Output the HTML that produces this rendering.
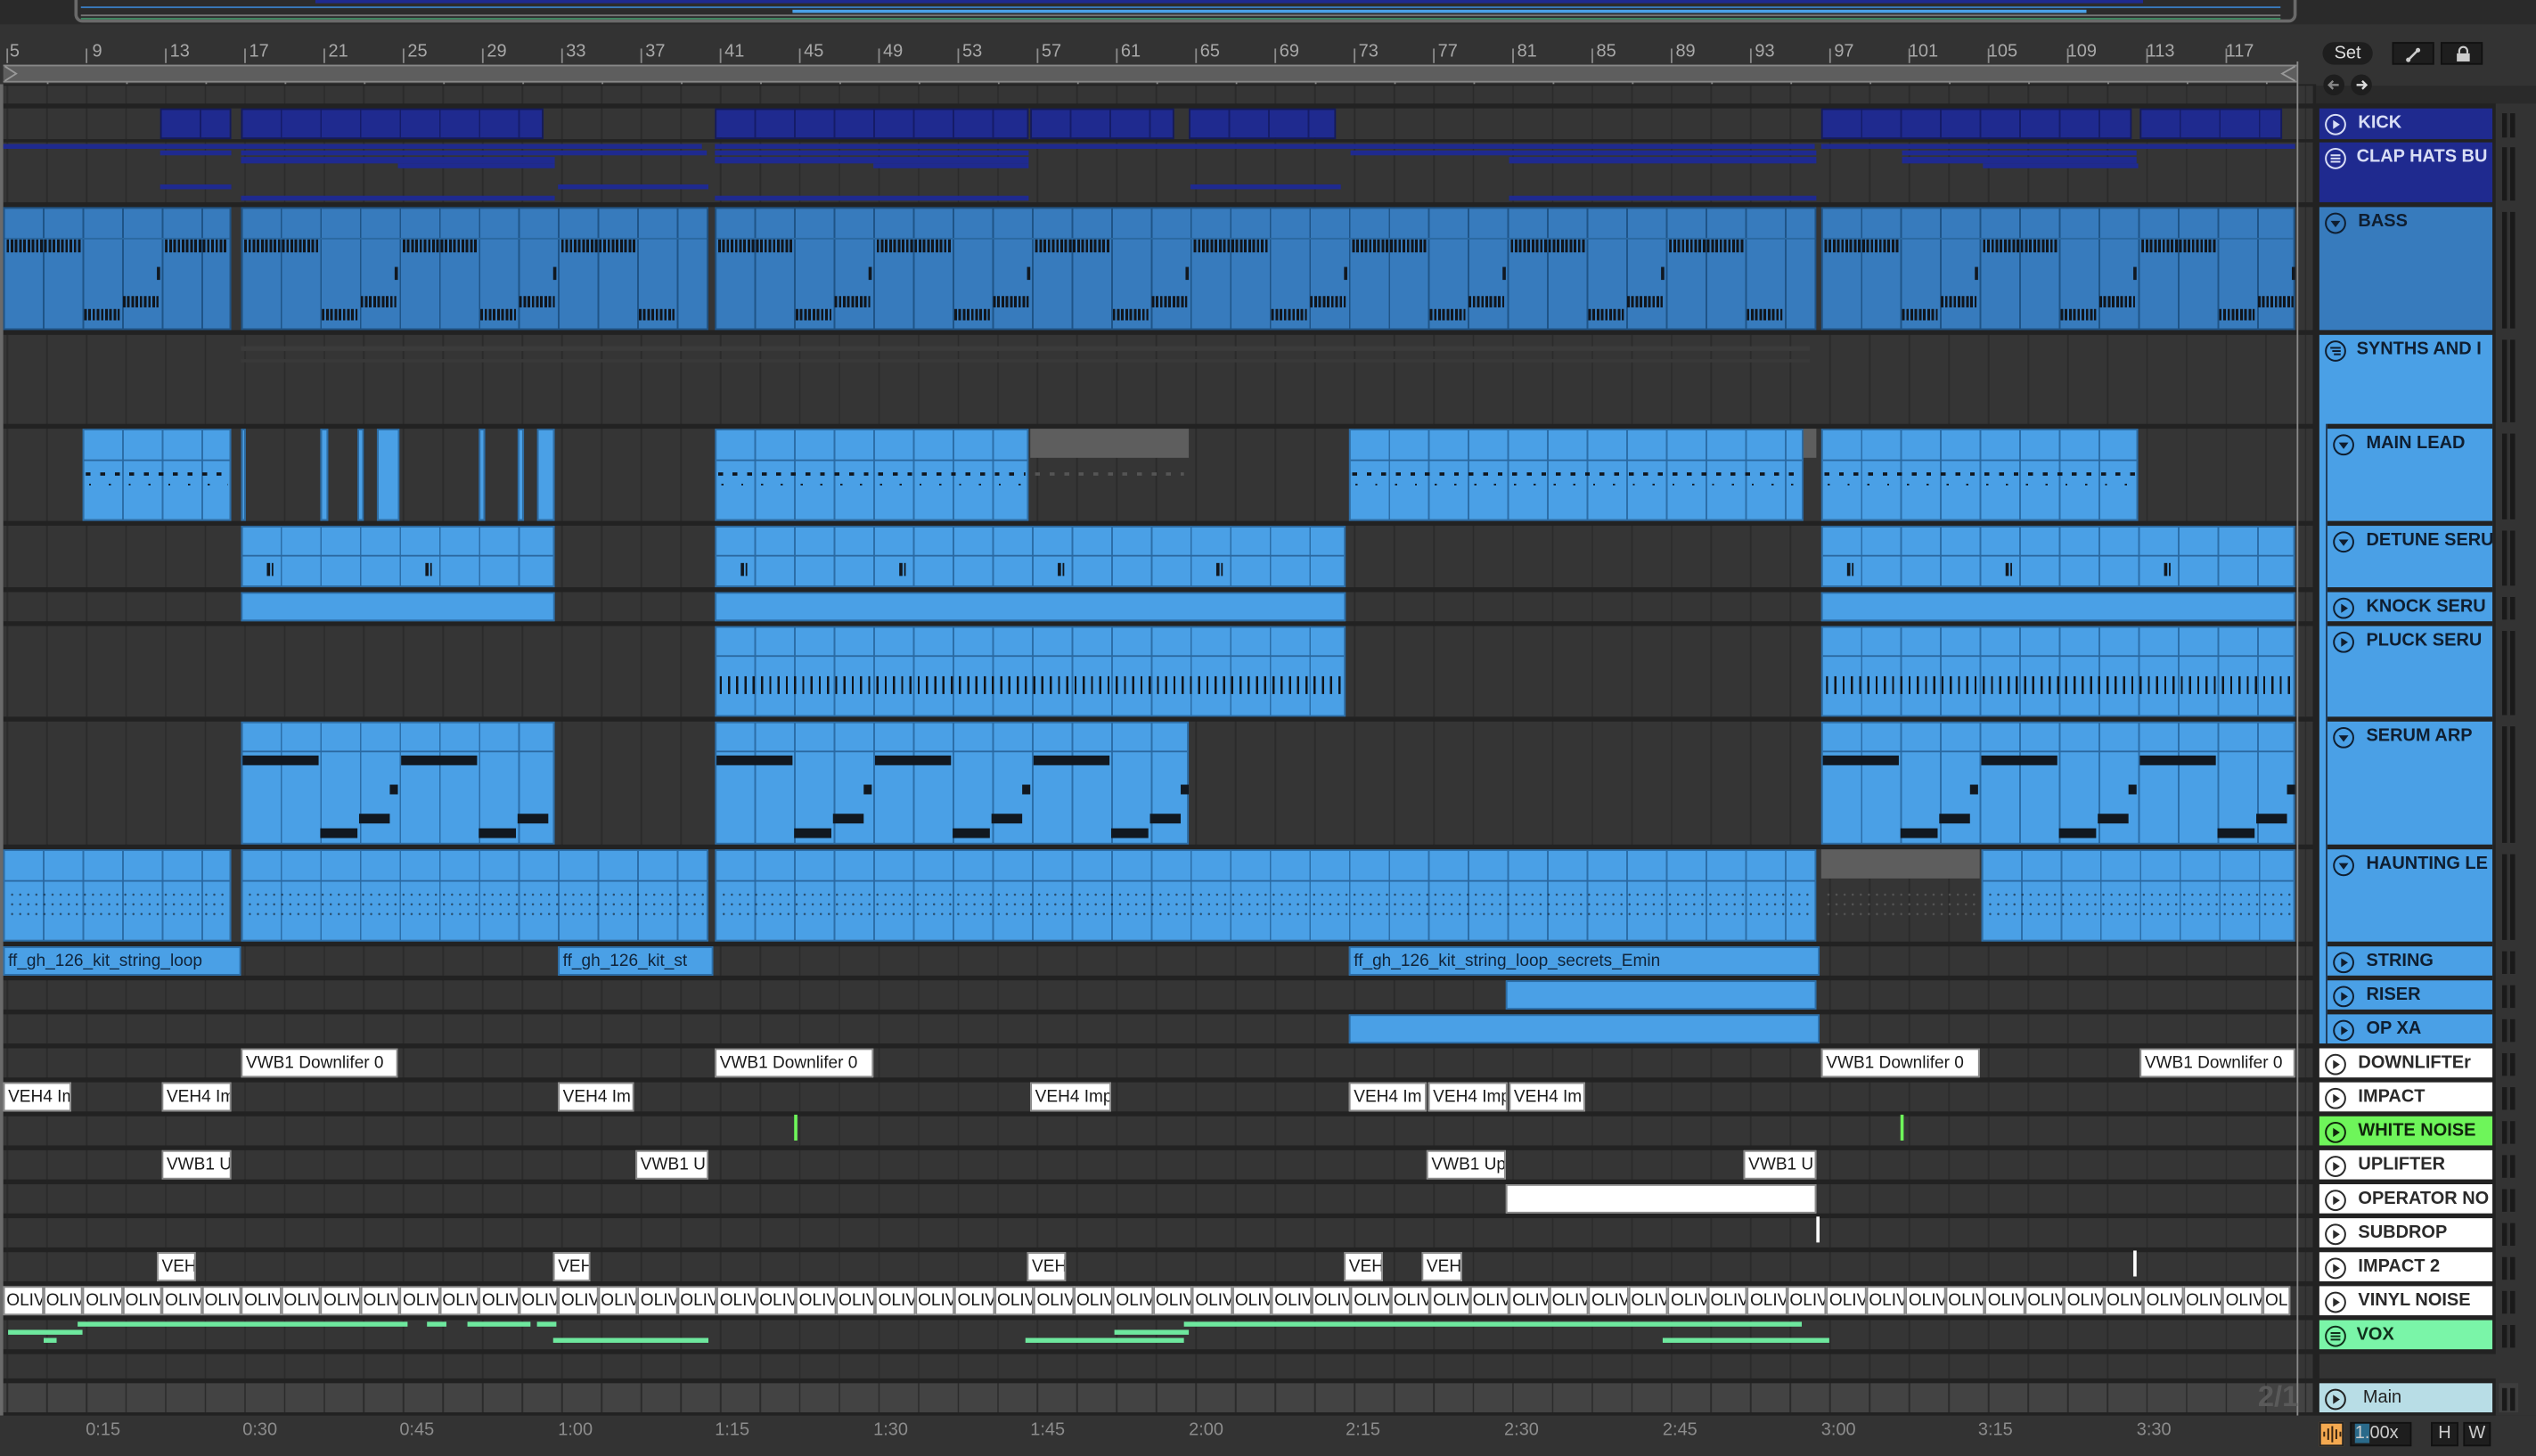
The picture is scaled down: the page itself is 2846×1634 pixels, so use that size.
<!DOCTYPE html>
<html><head><meta charset="utf-8">
<style>
html,body{margin:0;padding:0;background:#2b2b2b;overflow:hidden}
#s{position:absolute;left:0;top:0;width:1568px;height:900px;transform:scale(1.8151,1.8156);transform-origin:0 0;background:#2a2a2a;font-family:"Liberation Sans",sans-serif;overflow:hidden}
.a{position:absolute;box-sizing:border-box}
.lane{position:absolute;left:2px;width:1428px;background:repeating-linear-gradient(90deg,#2b2b2b 0 1px,#353535 1px 24.5px);background-position:2px 0}
.c{position:absolute;box-sizing:border-box;overflow:hidden}
.c::before{content:"";position:absolute;left:0;right:0;top:var(--h,-5px);height:1px;background:#2a68a0}
.l{background:repeating-linear-gradient(90deg,#4aa0e6 0 23.5px,#2c6ea8 23.5px 24.5px);border:1px solid #2c6ea8}
.b{background:repeating-linear-gradient(90deg,#377bbd 0 23.5px,#1f5487 23.5px 24.5px);border:1px solid #1f5487}
.k{background:repeating-linear-gradient(90deg,#1f2a8f 0 23.5px,#151c68 23.5px 24.5px);border:1px solid #141a5c}
.w{background:#fff;border:1px solid #8a8a8a;color:#1a1a1a;font-size:10.5px;line-height:16px;padding-left:2px;white-space:nowrap}
.t{font-size:10.5px;line-height:16px;padding-left:2px;white-space:nowrap;color:#10243a}
.g{position:absolute;background:#1f2a8f;height:2.5px}
.n{position:absolute;background:repeating-linear-gradient(90deg,#10151c 0 1.6px,transparent 1.6px 2.6px)}
.nb{position:absolute;background:#111820}
.h{position:absolute;left:1434px;width:107px;box-sizing:border-box;font-weight:bold;font-size:11px;white-space:nowrap;overflow:hidden}
.h svg{position:absolute;left:3px;top:3px}
.h span{position:absolute;left:24px;top:3px}
.m{position:absolute;left:1545px;width:12px}
.m::before,.m::after{content:"";position:absolute;top:3px;bottom:1px;width:3px;background:#1a1a1a}
.m::before{left:2px}.m::after{left:7px}
.ru{position:absolute;top:26px;font-size:11px;color:#a8a8a8}
.tk{position:absolute;width:1px;background:#8a8a8a}
.tm{position:absolute;top:878px;font-size:11px;color:#8c8c8c}
.ol{position:absolute;left:2px;top:795px;display:flex}
.ol i{font-style:normal;display:block;box-sizing:border-box;width:24.5px;height:18px;background:#fff;border:1px solid #8a8a8a;font-size:10.5px;line-height:16px;padding-left:1px;overflow:hidden;color:#1a1a1a;white-space:nowrap}
.vx{position:absolute;height:3px;background:#6ee89e}
</style></head><body>
<div id="s">
<!-- overview -->
<div class="a" style="left:0;top:0;width:1568px;height:15px;background:#2a2a2a"></div>
<div class="a" style="left:46px;top:-3px;width:1374px;height:17px;border:2px solid #6a6a6a;border-radius:0 0 5px 5px;background:#2c2c2c"></div>
<div class="a" style="left:195px;top:0;width:1130px;height:2px;background:#1f2a8f"></div>
<div class="a" style="left:50px;top:4px;width:1360px;height:1px;background:#3a7cc0"></div>
<div class="a" style="left:490px;top:6px;width:800px;height:2px;background:#4aa0e6"></div>
<div class="a" style="left:50px;top:9px;width:1360px;height:1px;background:#777"></div>
<div class="a" style="left:50px;top:11px;width:1360px;height:1px;background:#3f8a62"></div>
<div class="a" style="left:0;top:15px;width:1568px;height:38px;background:#333"></div>
<!-- ruler -->
<div id="ruler"></div>
<div class="ru" style="left:6px">5</div><div class="ru" style="left:57px">9</div><div class="ru" style="left:105px">13</div><div class="ru" style="left:154px">17</div><div class="ru" style="left:203px">21</div><div class="ru" style="left:252px">25</div><div class="ru" style="left:301px">29</div><div class="ru" style="left:350px">33</div><div class="ru" style="left:399px">37</div><div class="ru" style="left:448px">41</div><div class="ru" style="left:497px">45</div><div class="ru" style="left:546px">49</div><div class="ru" style="left:595px">53</div><div class="ru" style="left:644px">57</div><div class="ru" style="left:693px">61</div><div class="ru" style="left:742px">65</div><div class="ru" style="left:791px">69</div><div class="ru" style="left:840px">73</div><div class="ru" style="left:889px">77</div><div class="ru" style="left:938px">81</div><div class="ru" style="left:987px">85</div><div class="ru" style="left:1036px">89</div><div class="ru" style="left:1085px">93</div><div class="ru" style="left:1134px">97</div><div class="ru" style="left:1180px">101</div><div class="ru" style="left:1229px">105</div><div class="ru" style="left:1278px">109</div><div class="ru" style="left:1327px">113</div><div class="ru" style="left:1376px">117</div>
<div class="a" style="left:2px;top:40px;width:1418px;height:11px;background:#5e5e5e;border-top:1px solid #888;border-bottom:1px solid #888"></div>
<svg class="a" style="left:2px;top:40px" width="10" height="11"><path d="M1 1L8 5.5 1 10" fill="none" stroke="#999" stroke-width="1"/></svg>
<svg class="a" style="left:1408px;top:40px" width="12" height="11"><path d="M11 1L3 5.5 11 10" fill="none" stroke="#999" stroke-width="1"/></svg>
<!-- lanes -->
<div class="a" style="left:0;top:52px;width:1432px;height:823px;background:#222"></div>
<div class="lane" style="top:53px;height:11px"></div>
<div class="lane" style="top:67px;height:19px"></div>
<div class="lane" style="top:88px;height:37px"></div>
<div class="lane" style="top:128px;height:76px"></div>
<div class="lane" style="top:207px;height:55px"></div>
<div class="lane" style="top:265px;height:57px"></div>
<div class="lane" style="top:325px;height:38px"></div>
<div class="lane" style="top:366px;height:18px"></div>
<div class="lane" style="top:387px;height:56px"></div>
<div class="lane" style="top:446px;height:76px"></div>
<div class="lane" style="top:525px;height:57px"></div>
<div class="lane" style="top:585px;height:18px"></div>
<div class="lane" style="top:606px;height:18px"></div>
<div class="lane" style="top:627px;height:18px"></div>
<div class="lane" style="top:648px;height:18px"></div>
<div class="lane" style="top:669px;height:18px"></div>
<div class="lane" style="top:690px;height:18px"></div>
<div class="lane" style="top:711px;height:18px"></div>
<div class="lane" style="top:732px;height:18px"></div>
<div class="lane" style="top:753px;height:18px"></div>
<div class="lane" style="top:774px;height:18px"></div>
<div class="lane" style="top:795px;height:18px"></div>
<div class="lane" style="top:816px;height:18px"></div>
<div class="lane" style="top:837px;height:15px"></div>
<div class="lane" style="top:855px;height:18px;background:repeating-linear-gradient(90deg,#2b2b2b 0 1px,#434343 1px 24.5px);background-position:2px 0"></div>
<div class="a" style="left:0;top:52px;width:2px;height:823px;background:#6a6a6a"></div>
<!-- synth track faint -->
<div class="a" style="left:149px;top:214px;width:970px;height:3px;background:#3b3b3b"></div>
<div class="a" style="left:149px;top:222px;width:970px;height:2px;background:#393939"></div>
<!-- KICK -->
<div class="c k" style="left:99px;top:67px;width:44px;height:19px"></div>
<div class="c k" style="left:149px;top:67px;width:187px;height:19px"></div>
<div class="c k" style="left:442px;top:67px;width:194px;height:19px"></div>
<div class="c k" style="left:637px;top:67px;width:89px;height:19px"></div>
<div class="c k" style="left:735px;top:67px;width:91px;height:19px"></div>
<div class="c k" style="left:1126px;top:67px;width:192px;height:19px"></div>
<div class="c k" style="left:1323px;top:67px;width:88px;height:19px"></div>
<!-- CLAP lines -->
<div class="g" style="left:2px;top:89px;width:432px"></div><div class="g" style="left:442px;top:89px;width:680px"></div><div class="g" style="left:1126px;top:89px;width:293px"></div>
<div class="g" style="left:99px;top:93px;width:44px"></div><div class="g" style="left:149px;top:93px;width:288px"></div><div class="g" style="left:442px;top:93px;width:194px"></div><div class="g" style="left:835px;top:93px;width:288px"></div><div class="g" style="left:1176px;top:93px;width:145px"></div>
<div class="g" style="left:149px;top:97px;width:194px;height:4px"></div><div class="g" style="left:442px;top:97px;width:194px;height:4px"></div><div class="g" style="left:933px;top:97px;width:190px;height:4px"></div><div class="g" style="left:1176px;top:97px;width:145px;height:4px"></div>
<div class="g" style="left:246px;top:101px;width:97px"></div><div class="g" style="left:540px;top:101px;width:96px"></div><div class="g" style="left:1226px;top:101px;width:96px"></div>
<div class="g" style="left:99px;top:114px;width:44px"></div><div class="g" style="left:345px;top:114px;width:93px"></div><div class="g" style="left:736px;top:114px;width:93px"></div>
<div class="g" style="left:149px;top:121px;width:194px"></div><div class="g" style="left:442px;top:121px;width:194px"></div><div class="g" style="left:933px;top:121px;width:190px"></div>
<!-- BASS -->
<div class="c b" style="left:2px;top:128px;width:141px;height:76px;--h:18px"></div>
<div class="c b" style="left:149px;top:128px;width:289px;height:76px;--h:18px"></div>
<div class="c b" style="left:442px;top:128px;width:681px;height:76px;--h:18px"></div>
<div class="c b" style="left:1126px;top:128px;width:293px;height:76px;--h:18px"></div>
<!-- MAIN LEAD -->
<div class="c l" style="left:51px;top:265px;width:92px;height:57px;--h:18px"></div>
<div class="c l" style="left:149px;top:265px;width:3px;height:57px"></div>
<div class="c l" style="left:198px;top:265px;width:5px;height:57px"></div>
<div class="c l" style="left:221px;top:265px;width:4px;height:57px"></div>
<div class="c l" style="left:233px;top:265px;width:14px;height:57px"></div>
<div class="c l" style="left:296px;top:265px;width:4px;height:57px"></div>
<div class="c l" style="left:320px;top:265px;width:4px;height:57px"></div>
<div class="c l" style="left:332px;top:265px;width:11px;height:57px"></div>
<div class="c l" style="left:442px;top:265px;width:194px;height:57px;--h:18px"></div>
<div class="a" style="left:637px;top:265px;width:98px;height:18px;background:#5e5e5e"></div>
<div class="c l" style="left:834px;top:265px;width:281px;height:57px;--h:18px"></div>
<div class="a" style="left:1115px;top:265px;width:8px;height:18px;background:#5e5e5e"></div>
<div class="c l" style="left:1126px;top:265px;width:196px;height:57px;--h:18px"></div>
<!-- DETUNE / KNOCK -->
<div class="c l" style="left:149px;top:325px;width:194px;height:38px;--h:17px"></div>
<div class="c l" style="left:442px;top:325px;width:390px;height:38px;--h:17px"></div>
<div class="c l" style="left:1126px;top:325px;width:293px;height:38px;--h:17px"></div>
<div class="c l" style="left:149px;top:366px;width:194px;height:18px;background:#4aa0e6"></div>
<div class="c l" style="left:442px;top:366px;width:390px;height:18px;background:#4aa0e6"></div>
<div class="c l" style="left:1126px;top:366px;width:293px;height:18px;background:#4aa0e6"></div>
<!-- PLUCK -->
<div class="c l" style="left:442px;top:387px;width:390px;height:56px;--h:17px"></div>
<div class="c l" style="left:1126px;top:387px;width:293px;height:56px;--h:17px"></div>
<div class="n" style="left:445px;top:418px;width:385px;height:11px;background:repeating-linear-gradient(90deg,#10151c 0 1.3px,transparent 1.3px 5.1px)"></div>
<div class="n" style="left:1129px;top:418px;width:288px;height:11px;background:repeating-linear-gradient(90deg,#10151c 0 1.3px,transparent 1.3px 5.1px)"></div>
<!-- SERUM ARP -->
<div class="c l" style="left:149px;top:446px;width:194px;height:76px;--h:17px"></div>
<div class="c l" style="left:442px;top:446px;width:293px;height:76px;--h:17px"></div>
<div class="c l" style="left:1126px;top:446px;width:293px;height:76px;--h:17px"></div>
<!-- HAUNTING -->
<div class="c l" style="left:2px;top:525px;width:141px;height:57px;--h:18px"></div>
<div class="c l" style="left:149px;top:525px;width:289px;height:57px;--h:18px"></div>
<div class="c l" style="left:442px;top:525px;width:681px;height:57px;--h:18px"></div>
<div class="a" style="left:1126px;top:525px;width:98px;height:18px;background:#5e5e5e"></div>
<div class="c l" style="left:1225px;top:525px;width:194px;height:57px;--h:18px"></div>
<!-- STRING etc -->
<div class="c l t" style="left:2px;top:585px;width:147px;height:18px;background:#4aa0e6">ff_gh_126_kit_string_loop</div>
<div class="c l t" style="left:345px;top:585px;width:96px;height:18px;background:#4aa0e6">ff_gh_126_kit_st</div>
<div class="c l t" style="left:834px;top:585px;width:291px;height:18px;background:#4aa0e6">ff_gh_126_kit_string_loop_secrets_Emin</div>
<div class="c l" style="left:931px;top:606px;width:192px;height:18px;background:#4aa0e6"></div>
<div class="c l" style="left:834px;top:627px;width:291px;height:18px;background:#4aa0e6"></div>
<div class="c w" style="left:149px;top:648px;width:97px;height:18px">VWB1 Downlifer 0</div>
<div class="c w" style="left:442px;top:648px;width:98px;height:18px">VWB1 Downlifer 0</div>
<div class="c w" style="left:1126px;top:648px;width:98px;height:18px">VWB1 Downlifer 0</div>
<div class="c w" style="left:1323px;top:648px;width:96px;height:18px">VWB1 Downlifer 0</div>
<div class="c w" style="left:2px;top:669px;width:42px;height:18px">VEH4 Im</div>
<div class="c w" style="left:100px;top:669px;width:43px;height:18px">VEH4 Im</div>
<div class="c w" style="left:345px;top:669px;width:47px;height:18px">VEH4 Im</div>
<div class="c w" style="left:637px;top:669px;width:50px;height:18px">VEH4 Imp</div>
<div class="c w" style="left:834px;top:669px;width:48px;height:18px">VEH4 Im</div>
<div class="c w" style="left:883px;top:669px;width:49px;height:18px">VEH4 Imp</div>
<div class="c w" style="left:933px;top:669px;width:47px;height:18px">VEH4 Im</div>
<div class="a" style="left:491px;top:689px;width:2px;height:16px;background:#6ef55a"></div>
<div class="a" style="left:1175px;top:689px;width:2px;height:16px;background:#6ef55a"></div>
<div class="c w" style="left:100px;top:711px;width:43px;height:18px">VWB1 U</div>
<div class="c w" style="left:393px;top:711px;width:45px;height:18px">VWB1 U</div>
<div class="c w" style="left:882px;top:711px;width:49px;height:18px">VWB1 Up</div>
<div class="c w" style="left:1078px;top:711px;width:45px;height:18px">VWB1 U</div>
<div class="c w" style="left:931px;top:732px;width:192px;height:18px"></div>
<div class="a" style="left:1123px;top:752px;width:2px;height:16px;background:#fff"></div>
<div class="c w" style="left:97px;top:774px;width:24px;height:18px">VEH</div>
<div class="c w" style="left:342px;top:774px;width:23px;height:18px">VEH</div>
<div class="c w" style="left:635px;top:774px;width:24px;height:18px">VEH</div>
<div class="c w" style="left:831px;top:774px;width:24px;height:18px">VEH</div>
<div class="c w" style="left:879px;top:774px;width:25px;height:18px">VEH</div>
<div class="a" style="left:1319px;top:773px;width:2px;height:16px;background:#fff"></div>
<div class="ol"><i>OLIV</i><i>OLIV</i><i>OLIV</i><i>OLIV</i><i>OLIV</i><i>OLIV</i><i>OLIV</i><i>OLIV</i><i>OLIV</i><i>OLIV</i><i>OLIV</i><i>OLIV</i><i>OLIV</i><i>OLIV</i><i>OLIV</i><i>OLIV</i><i>OLIV</i><i>OLIV</i><i>OLIV</i><i>OLIV</i><i>OLIV</i><i>OLIV</i><i>OLIV</i><i>OLIV</i><i>OLIV</i><i>OLIV</i><i>OLIV</i><i>OLIV</i><i>OLIV</i><i>OLIV</i><i>OLIV</i><i>OLIV</i><i>OLIV</i><i>OLIV</i><i>OLIV</i><i>OLIV</i><i>OLIV</i><i>OLIV</i><i>OLIV</i><i>OLIV</i><i>OLIV</i><i>OLIV</i><i>OLIV</i><i>OLIV</i><i>OLIV</i><i>OLIV</i><i>OLIV</i><i>OLIV</i><i>OLIV</i><i>OLIV</i><i>OLIV</i><i>OLIV</i><i>OLIV</i><i>OLIV</i><i>OLIV</i><i>OLIV</i><i>OLIV</i><i style="width:17px">OLIV</i></div>
<!-- VOX -->
<div class="vx" style="left:48px;top:817px;width:204px"></div><div class="vx" style="left:264px;top:817px;width:12px"></div><div class="vx" style="left:289px;top:817px;width:39px"></div><div class="vx" style="left:332px;top:817px;width:12px"></div>
<div class="vx" style="left:5px;top:822px;width:46px"></div><div class="vx" style="left:27px;top:827px;width:8px"></div>
<div class="vx" style="left:342px;top:827px;width:96px"></div><div class="vx" style="left:634px;top:827px;width:98px"></div><div class="vx" style="left:689px;top:822px;width:46px"></div>
<div class="vx" style="left:732px;top:817px;width:382px"></div><div class="vx" style="left:1028px;top:827px;width:103px"></div>
<div id="deco"></div>
<!-- locator -->
<div class="a" style="left:1420px;top:38px;width:1px;height:837px;background:#8a8a8a"></div>
<div class="a" style="left:1396px;top:853px;font-size:18px;font-weight:bold;color:#5a5a5a">2/1</div>
<!-- right top controls -->
<div class="a" style="left:1436px;top:26px;width:31px;height:14px;border-radius:7px;background:#1e1e1e;color:#ddd;font-size:11px;text-align:center;line-height:14px">Set</div>
<div class="a" style="left:1479px;top:26px;width:26px;height:14px;background:#1e1e1e;border:1px solid #111"><svg width="26" height="14"><path d="M9 10L15 4" stroke="#ccc" stroke-width="1.4"/><circle cx="9" cy="10" r="1.4" fill="#ccc"/><circle cx="15" cy="4" r="1.4" fill="#ccc"/></svg></div>
<div class="a" style="left:1509px;top:26px;width:26px;height:14px;background:#1e1e1e;border:1px solid #111"><svg width="26" height="14"><rect x="9" y="6" width="8" height="5" fill="#ccc"/><path d="M10.5 6V4.5a2.5 2.5 0 015 0V6" fill="none" stroke="#ccc" stroke-width="1.2"/></svg></div>
<svg class="a" style="left:1436px;top:45px" width="32" height="16"><circle cx="7" cy="7.5" r="6.5" fill="#1e1e1e"/><circle cx="24" cy="7.5" r="6.5" fill="#1e1e1e"/><path d="M10 7.5H4M6.5 5L4 7.5 6.5 10" fill="none" stroke="#888" stroke-width="1.3"/><path d="M21 7.5h6M24.5 5L27 7.5 24.5 10" fill="none" stroke="#ddd" stroke-width="1.3"/></svg>
<!-- header panel bg -->
<div class="a" style="left:1430px;top:64px;width:138px;height:811px;background:#222"></div>
<div class="a" style="left:1543px;top:64px;width:25px;height:811px;background:#333"></div>
<!-- headers -->
<div class="h" style="top:67px;height:19px;background:#1f2a8f;color:#d8ddf5"><svg width="14" height="14" viewBox="0 0 14 14"><circle cx="7" cy="7" r="6" fill="none" stroke="currentColor" stroke-width="1.1"/><path d="M5.5 4.2L9.7 7 5.5 9.8z" fill="currentColor"/></svg><span>KICK</span></div>
<div class="h" style="top:88px;height:37px;background:#1f2a8f;color:#d8ddf5"><svg width="14" height="14" viewBox="0 0 14 14"><circle cx="7" cy="7" r="6" fill="none" stroke="currentColor" stroke-width="1.1"/><path d="M4 5h6M4 7h6M4 9h6" stroke="currentColor" stroke-width="1.1"/></svg><span style="left:23px">CLAP HATS BU</span></div>
<div class="h" style="top:128px;height:76px;background:#377bbd;color:#0f1e30"><svg width="14" height="14" viewBox="0 0 14 14"><circle cx="7" cy="7" r="6" fill="none" stroke="currentColor" stroke-width="1.1"/><path d="M4 5.5h6L7 9.5z" fill="currentColor"/></svg><span>BASS</span></div>
<div class="h" style="top:207px;height:438px;background:#4aa0e6;color:#0f1e30"><svg width="14" height="14" viewBox="0 0 14 14"><circle cx="7" cy="7" r="6" fill="none" stroke="currentColor" stroke-width="1.1"/><path d="M3.8 5h6.4M5 7h5.2M6 9h4.2" stroke="currentColor" stroke-width="1.1"/></svg><span style="left:23px">SYNTHS AND I</span></div>
<div class="a" style="left:1438px;top:262px;width:1px;height:383px;background:#1d3550"></div>
<div class="a" style="left:1439px;top:262px;width:102px;height:3px;background:#222"></div>
<div class="a" style="left:1439px;top:322px;width:102px;height:3px;background:#222"></div>
<div class="a" style="left:1439px;top:363px;width:102px;height:3px;background:#222"></div>
<div class="a" style="left:1439px;top:384px;width:102px;height:3px;background:#222"></div>
<div class="a" style="left:1439px;top:443px;width:102px;height:3px;background:#222"></div>
<div class="a" style="left:1439px;top:522px;width:102px;height:3px;background:#222"></div>
<div class="a" style="left:1439px;top:582px;width:102px;height:3px;background:#222"></div>
<div class="a" style="left:1439px;top:603px;width:102px;height:3px;background:#222"></div>
<div class="a" style="left:1439px;top:624px;width:102px;height:3px;background:#222"></div>
<div class="h" style="left:1439px;width:102px;top:265px;height:19px;color:#0f1e30"><svg width="14" height="14" viewBox="0 0 14 14"><circle cx="7" cy="7" r="6" fill="none" stroke="currentColor" stroke-width="1.1"/><path d="M4 5.5h6L7 9.5z" fill="currentColor"/></svg><span>MAIN LEAD</span></div>
<div class="h" style="left:1439px;width:102px;top:325px;height:19px;color:#0f1e30"><svg width="14" height="14" viewBox="0 0 14 14"><circle cx="7" cy="7" r="6" fill="none" stroke="currentColor" stroke-width="1.1"/><path d="M4 5.5h6L7 9.5z" fill="currentColor"/></svg><span>DETUNE SERU</span></div>
<div class="h" style="left:1439px;width:102px;top:366px;height:18px;color:#0f1e30"><svg width="14" height="14" viewBox="0 0 14 14"><circle cx="7" cy="7" r="6" fill="none" stroke="currentColor" stroke-width="1.1"/><path d="M5.5 4.2L9.7 7 5.5 9.8z" fill="currentColor"/></svg><span>KNOCK SERU</span></div>
<div class="h" style="left:1439px;width:102px;top:387px;height:19px;color:#0f1e30"><svg width="14" height="14" viewBox="0 0 14 14"><circle cx="7" cy="7" r="6" fill="none" stroke="currentColor" stroke-width="1.1"/><path d="M5.5 4.2L9.7 7 5.5 9.8z" fill="currentColor"/></svg><span>PLUCK SERU</span></div>
<div class="h" style="left:1439px;width:102px;top:446px;height:19px;color:#0f1e30"><svg width="14" height="14" viewBox="0 0 14 14"><circle cx="7" cy="7" r="6" fill="none" stroke="currentColor" stroke-width="1.1"/><path d="M4 5.5h6L7 9.5z" fill="currentColor"/></svg><span>SERUM ARP</span></div>
<div class="h" style="left:1439px;width:102px;top:525px;height:19px;color:#0f1e30"><svg width="14" height="14" viewBox="0 0 14 14"><circle cx="7" cy="7" r="6" fill="none" stroke="currentColor" stroke-width="1.1"/><path d="M4 5.5h6L7 9.5z" fill="currentColor"/></svg><span>HAUNTING LE</span></div>
<div class="h" style="left:1439px;width:102px;top:585px;height:18px;color:#0f1e30"><svg width="14" height="14" viewBox="0 0 14 14"><circle cx="7" cy="7" r="6" fill="none" stroke="currentColor" stroke-width="1.1"/><path d="M5.5 4.2L9.7 7 5.5 9.8z" fill="currentColor"/></svg><span>STRING</span></div>
<div class="h" style="left:1439px;width:102px;top:606px;height:18px;color:#0f1e30"><svg width="14" height="14" viewBox="0 0 14 14"><circle cx="7" cy="7" r="6" fill="none" stroke="currentColor" stroke-width="1.1"/><path d="M5.5 4.2L9.7 7 5.5 9.8z" fill="currentColor"/></svg><span>RISER</span></div>
<div class="h" style="left:1439px;width:102px;top:627px;height:18px;color:#0f1e30"><svg width="14" height="14" viewBox="0 0 14 14"><circle cx="7" cy="7" r="6" fill="none" stroke="currentColor" stroke-width="1.1"/><path d="M5.5 4.2L9.7 7 5.5 9.8z" fill="currentColor"/></svg><span>OP XA</span></div>
<div class="h" style="top:648px;height:18px;background:#fff;color:#2a2a2a"><svg width="14" height="14" viewBox="0 0 14 14"><circle cx="7" cy="7" r="6" fill="none" stroke="currentColor" stroke-width="1.1"/><path d="M5.5 4.2L9.7 7 5.5 9.8z" fill="currentColor"/></svg><span>DOWNLIFTEr</span></div>
<div class="h" style="top:669px;height:18px;background:#fff;color:#2a2a2a"><svg width="14" height="14" viewBox="0 0 14 14"><circle cx="7" cy="7" r="6" fill="none" stroke="currentColor" stroke-width="1.1"/><path d="M5.5 4.2L9.7 7 5.5 9.8z" fill="currentColor"/></svg><span>IMPACT</span></div>
<div class="h" style="top:690px;height:18px;background:#6ef55a;color:#10240c"><svg width="14" height="14" viewBox="0 0 14 14"><circle cx="7" cy="7" r="6" fill="none" stroke="currentColor" stroke-width="1.1"/><path d="M5.5 4.2L9.7 7 5.5 9.8z" fill="currentColor"/></svg><span>WHITE NOISE</span></div>
<div class="h" style="top:711px;height:18px;background:#fff;color:#2a2a2a"><svg width="14" height="14" viewBox="0 0 14 14"><circle cx="7" cy="7" r="6" fill="none" stroke="currentColor" stroke-width="1.1"/><path d="M5.5 4.2L9.7 7 5.5 9.8z" fill="currentColor"/></svg><span>UPLIFTER</span></div>
<div class="h" style="top:732px;height:18px;background:#fff;color:#2a2a2a"><svg width="14" height="14" viewBox="0 0 14 14"><circle cx="7" cy="7" r="6" fill="none" stroke="currentColor" stroke-width="1.1"/><path d="M5.5 4.2L9.7 7 5.5 9.8z" fill="currentColor"/></svg><span>OPERATOR NO</span></div>
<div class="h" style="top:753px;height:18px;background:#fff;color:#2a2a2a"><svg width="14" height="14" viewBox="0 0 14 14"><circle cx="7" cy="7" r="6" fill="none" stroke="currentColor" stroke-width="1.1"/><path d="M5.5 4.2L9.7 7 5.5 9.8z" fill="currentColor"/></svg><span>SUBDROP</span></div>
<div class="h" style="top:774px;height:18px;background:#fff;color:#2a2a2a"><svg width="14" height="14" viewBox="0 0 14 14"><circle cx="7" cy="7" r="6" fill="none" stroke="currentColor" stroke-width="1.1"/><path d="M5.5 4.2L9.7 7 5.5 9.8z" fill="currentColor"/></svg><span>IMPACT 2</span></div>
<div class="h" style="top:795px;height:18px;background:#fff;color:#2a2a2a"><svg width="14" height="14" viewBox="0 0 14 14"><circle cx="7" cy="7" r="6" fill="none" stroke="currentColor" stroke-width="1.1"/><path d="M5.5 4.2L9.7 7 5.5 9.8z" fill="currentColor"/></svg><span>VINYL NOISE</span></div>
<div class="h" style="top:816px;height:18px;background:#7af5a8;color:#10301c"><svg width="14" height="14" viewBox="0 0 14 14"><circle cx="7" cy="7" r="6" fill="none" stroke="currentColor" stroke-width="1.1"/><path d="M4 5h6M4 7h6M4 9h6" stroke="currentColor" stroke-width="1.1"/></svg><span style="left:23px">VOX</span></div>
<div class="a" style="left:1434px;top:837px;width:134px;height:15px;background:#333"></div>
<div class="h" style="top:855px;height:18px;background:#b8dde6;color:#222"><svg width="14" height="14" viewBox="0 0 14 14"><circle cx="7" cy="7" r="6" fill="none" stroke="currentColor" stroke-width="1.1"/><path d="M5.5 4.2L9.7 7 5.5 9.8z" fill="currentColor"/></svg><span style="left:27px;font-weight:normal">Main</span></div>
<!-- meters -->
<div class="m" style="top:67px;height:19px"></div><div class="m" style="top:88px;height:37px"></div><div class="m" style="top:128px;height:76px"></div><div class="m" style="top:207px;height:55px"></div><div class="m" style="top:265px;height:57px"></div><div class="m" style="top:325px;height:38px"></div><div class="m" style="top:366px;height:18px"></div><div class="m" style="top:387px;height:56px"></div><div class="m" style="top:446px;height:76px"></div><div class="m" style="top:525px;height:57px"></div><div class="m" style="top:585px;height:18px"></div><div class="m" style="top:606px;height:18px"></div><div class="m" style="top:627px;height:18px"></div><div class="m" style="top:648px;height:18px"></div><div class="m" style="top:669px;height:18px"></div><div class="m" style="top:690px;height:18px"></div><div class="m" style="top:711px;height:18px"></div><div class="m" style="top:732px;height:18px"></div><div class="m" style="top:753px;height:18px"></div><div class="m" style="top:774px;height:18px"></div><div class="m" style="top:795px;height:18px"></div><div class="m" style="top:816px;height:18px"></div><div class="m" style="top:855px;height:18px;background:#3d3d3d"></div>
<!-- bottom -->
<div class="a" style="left:0;top:875px;width:1568px;height:25px;background:#333"></div>
<div class="tm" style="left:53px">0:15</div><div class="tm" style="left:150px">0:30</div><div class="tm" style="left:247px">0:45</div><div class="tm" style="left:345px">1:00</div><div class="tm" style="left:442px">1:15</div><div class="tm" style="left:540px">1:30</div><div class="tm" style="left:637px">1:45</div><div class="tm" style="left:735px">2:00</div><div class="tm" style="left:832px">2:15</div><div class="tm" style="left:930px">2:30</div><div class="tm" style="left:1028px">2:45</div><div class="tm" style="left:1126px">3:00</div><div class="tm" style="left:1223px">3:15</div><div class="tm" style="left:1321px">3:30</div>
<div class="a" style="left:1434px;top:879px;width:15px;height:15px;background:#f5a950;border:1px solid #222"><svg width="13" height="13"><path d="M2 5v3M4.5 3v7M7 1.5v10M9.5 3.5v6M12 5v3" stroke="#3a2410" stroke-width="1.1"/></svg></div>
<div class="a" style="left:1453px;top:879px;width:38px;height:15px;background:#1e1e1e;border:1px solid #111;color:#ccc;font-size:11px;line-height:13px;padding-left:2px"><span style="background:#2a6a8a">1.</span>00x</div>
<div class="a" style="left:1503px;top:879px;width:17px;height:15px;background:#1e1e1e;border:1px solid #111;color:#ccc;font-size:11px;line-height:13px;text-align:center">H</div>
<div class="a" style="left:1523px;top:879px;width:17px;height:15px;background:#1e1e1e;border:1px solid #111;color:#ccc;font-size:11px;line-height:13px;text-align:center">W</div>
</div>
<script>
(function(){
var d=document.getElementById('deco'),r=document.getElementById('ruler'),h='';
function a(cls,x,y,w,hh){h+='<div class="'+cls+'" style="left:'+x+'px;top:'+y+'px;width:'+w+'px;height:'+hh+'px"></div>';}
var rh='';
for(var i=0;i<58;i++){var x=4+i*12.25*2;rh+='<div class="tk" style="left:'+(x)+'px;top:'+(i%2?48:30)+'px;height:'+(i%2?4:9)+'px"></div>';}
r.innerHTML=rh;
// bass notes
[[2,143],[149,438],[442,1123],[1126,1419]].forEach(function(c){
 for(var g=c[0];g<c[1];g+=98){
  var e=Math.min(g+48,c[1]-2);a('n',g+2,148,e-g-2,8);
  if(g+72<c[1]) a('n',g+50,191,22,7);
  if(g+96<c[1]) a('n',g+74,183,22,7);
  if(g+96<c[1]) a('nb',g+95,165,2,8);
 }});
// main lead dots
[[51,143],[442,636],[834,1115],[1126,1322]].forEach(function(c){
 h+='<div class="n" style="left:'+(c[0]+2)+'px;top:292px;width:'+(c[1]-c[0]-4)+'px;height:1.5px;background:repeating-linear-gradient(90deg,#10151c 0 3px,transparent 3px 9px)"></div>';
 h+='<div class="n" style="left:'+(c[0]+4)+'px;top:299px;width:'+(c[1]-c[0]-6)+'px;height:1.3px;background:repeating-linear-gradient(90deg,#10151c 0 1.3px,transparent 1.3px 12.25px)"></div>';
});
h+='<div class="n" style="left:640px;top:292px;width:92px;height:1.5px;background:repeating-linear-gradient(90deg,#555 0 3px,transparent 3px 9px)"></div>';
// detune marks
[[149,343],[442,832],[1126,1419]].forEach(function(c){for(var g=c[0]+16;g<c[1];g+=98){a('nb',g,348,2,8);a('nb',g+3,348,1,8);}});
// serum arp
[[149,343],[442,735],[1126,1419]].forEach(function(c){for(var g=c[0];g<c[1]-10;g+=98){
 a('nb',g+1,467,47,6);
 if(g+72<=c[1]) a('nb',g+49,512,23,6);
 if(g+92<=c[1]) a('nb',g+73,503,19,6);
 if(g+97<=c[1]) a('nb',g+92,485,5,6);}});
// haunting dots
[[2,143],[149,438],[442,1123],[1225,1419]].forEach(function(c){
 h+='<div class="n" style="left:'+(c[0]+3)+'px;top:550px;width:'+(c[1]-c[0]-5)+'px;height:20px;background:radial-gradient(circle,#1a2a3a 0 0.6px,transparent 0.8px) 0 0/5px 6px;opacity:.7"></div>';
});
h+='<div class="n" style="left:1128px;top:550px;width:94px;height:20px;background:radial-gradient(circle,#555 0 0.6px,transparent 0.8px) 0 0/5px 6px"></div>';
d.innerHTML=h;
})();
</script>
</body></html>
